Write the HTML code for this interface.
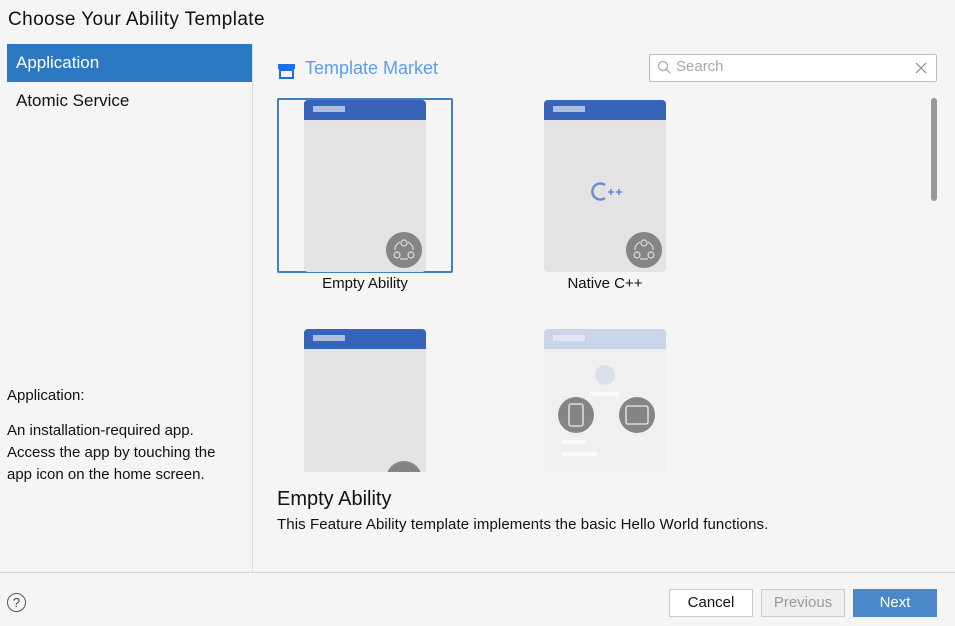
<!DOCTYPE html>
<html><head><style>
*{margin:0;padding:0;box-sizing:border-box}
body{width:955px;height:626px;background:#f5f5f5;font-family:"Liberation Sans",sans-serif;position:relative;overflow:hidden;color:#111}
.a{position:absolute;white-space:nowrap}
.card{position:absolute;width:122px;background:#e3e3e3;border-radius:4px;overflow:hidden}
.card .hd{height:20px;background:#3763b9}
.card .hd i{position:absolute;left:9px;top:6px;width:32px;height:6px;background:#aebde0}
.ic{position:absolute;width:36px;height:36px;border-radius:50%;background:#858585}
.btn{position:absolute;top:589px;height:28px;font-size:15px;text-align:center;line-height:26px;border:1px solid #ccc}
</style></head><body>
<div class="a" style="left:8px;top:9px;font-size:19px;letter-spacing:0.4px">Choose Your Ability Template</div>
<div class="a" style="left:252px;top:43px;width:1px;height:529px;background:#ddd"></div>
<div class="a" style="left:7px;top:44px;width:245px;height:38px;background:#2b79c2;color:#fff;font-size:17px;line-height:38px;padding-left:9px">Application</div>
<div class="a" style="left:16px;top:91px;font-size:17px">Atomic Service</div>
<div class="a" style="left:7px;top:387px;font-size:15px">Application:</div>
<div class="a" style="left:7px;top:420px;font-size:15px;line-height:22px;white-space:normal;width:220px">An installation-required app. Access the app by touching the app icon on the home screen.</div>

<svg class="a" style="left:278px;top:62px" width="18" height="17"><rect x="0" y="2" width="17" height="5" fill="#1a6ff0"/><rect x="2" y="8" width="13" height="8" fill="none" stroke="#1a6ff0" stroke-width="2"/></svg>
<div class="a" style="left:305px;top:58px;font-size:18px;color:#5b9ef0">Template Market</div>
<div class="a" style="left:649px;top:54px;width:288px;height:28px;background:#fff;border:1px solid #bbb;border-radius:2px"></div>
<svg class="a" style="left:657px;top:60px" width="14" height="14"><circle cx="6" cy="6" r="4.5" fill="none" stroke="#aaa" stroke-width="1.3"/><line x1="9" y1="9" x2="13" y2="13" stroke="#aaa" stroke-width="1.3"/></svg>
<div class="a" style="left:676px;top:58px;font-size:15px;color:#aaa">Search</div>
<svg class="a" style="left:915px;top:62px" width="12" height="12"><path d="M1 1L11 11M11 1L1 11" stroke="#888" stroke-width="1.2"/></svg>
<div class="a" style="left:931px;top:98px;width:6px;height:103px;background:#999;border-radius:3px"></div>

<div class="a" style="left:277px;top:98px;width:176px;height:175px;border:2px solid #3c80c8;border-radius:2px;background:#f5f5f5"></div>
<div class="card" style="left:304px;top:100px;height:172px"><div class="hd"><i></i></div></div>
<svg class="ic" style="left:386px;top:232px" viewBox="0 0 36 36"><g fill="none" stroke="#ddd" stroke-width="1.2"><circle cx="18" cy="11" r="3"/><circle cx="11" cy="23" r="3"/><circle cx="25" cy="23" r="3"/><path d="M14 10A9 9 0 0 0 9 18M22 10A9 9 0 0 1 27 18M14 27H22"/></g></svg>
<div class="a" style="left:277px;top:275px;width:176px;text-align:center;font-size:15px">Empty Ability</div>

<div class="card" style="left:544px;top:100px;height:172px"><div class="hd"><i></i></div></div>
<svg class="a" style="left:589px;top:180px" width="36" height="24"><path d="M16 5A8 8 0 1 0 16 18" fill="none" stroke="#6b8fd0" stroke-width="2.5"/><path d="M19 12h6M22 9v6M27 12h6M30 9v6" stroke="#6b8fd0" stroke-width="1.8"/></svg>
<svg class="ic" style="left:626px;top:232px" viewBox="0 0 36 36"><g fill="none" stroke="#ddd" stroke-width="1.2"><circle cx="18" cy="11" r="3"/><circle cx="11" cy="23" r="3"/><circle cx="25" cy="23" r="3"/><path d="M14 10A9 9 0 0 0 9 18M22 10A9 9 0 0 1 27 18M14 27H22"/></g></svg>
<div class="a" style="left:544px;top:275px;width:122px;text-align:center;font-size:15px">Native C++</div>

<div class="a" style="left:270px;top:310px;width:660px;height:162px;overflow:hidden">
<div class="card" style="left:34px;top:19px;height:160px;border-radius:4px 4px 0 0"><div class="hd"><i></i></div></div>
<div class="ic" style="left:116px;top:151px"></div>
<div class="card" style="left:274px;top:19px;height:160px;background:#f0f0f0"><div class="hd" style="background:#cad5ea"><i style="background:#e2e8f3"></i></div>
<div class="a" style="left:51px;top:36px;width:20px;height:20px;border-radius:50%;background:#dbe1ec"></div>
<div class="a" style="left:45px;top:63px;width:30px;height:4px;background:#fafafa"></div>
<div class="a" style="left:18px;top:111px;width:24px;height:4px;background:#fafafa"></div>
<div class="a" style="left:18px;top:123px;width:35px;height:4px;background:#fafafa"></div>
</div>
<svg class="ic" style="left:288px;top:87px" viewBox="0 0 36 36"><rect x="11" y="7" width="14" height="22" rx="2" fill="none" stroke="#eee" stroke-width="1.3"/></svg>
<svg class="ic" style="left:349px;top:87px" viewBox="0 0 36 36"><rect x="7" y="9" width="22" height="18" rx="2" fill="none" stroke="#eee" stroke-width="1.3"/></svg>
</div>

<div class="a" style="left:277px;top:488px;font-size:20px">Empty Ability</div>
<div class="a" style="left:277px;top:516px;font-size:15px;letter-spacing:0.1px">This Feature Ability template implements the basic Hello World functions.</div>

<div class="a" style="left:0;top:572px;width:955px;height:1px;background:#d6d6d6"></div>
<div class="a" style="left:7px;top:593px;width:19px;height:19px;border:1.3px solid #555;border-radius:50%;font-size:13px;text-align:center;line-height:17px;color:#444">?</div>
<div class="btn" style="left:669px;width:84px;background:#fff">Cancel</div>
<div class="btn" style="left:761px;width:84px;background:#efefef;color:#999">Previous</div>
<div class="btn" style="left:853px;width:84px;background:#4a88c9;color:#fff;border-color:#4a88c9">Next</div>
</body></html>
